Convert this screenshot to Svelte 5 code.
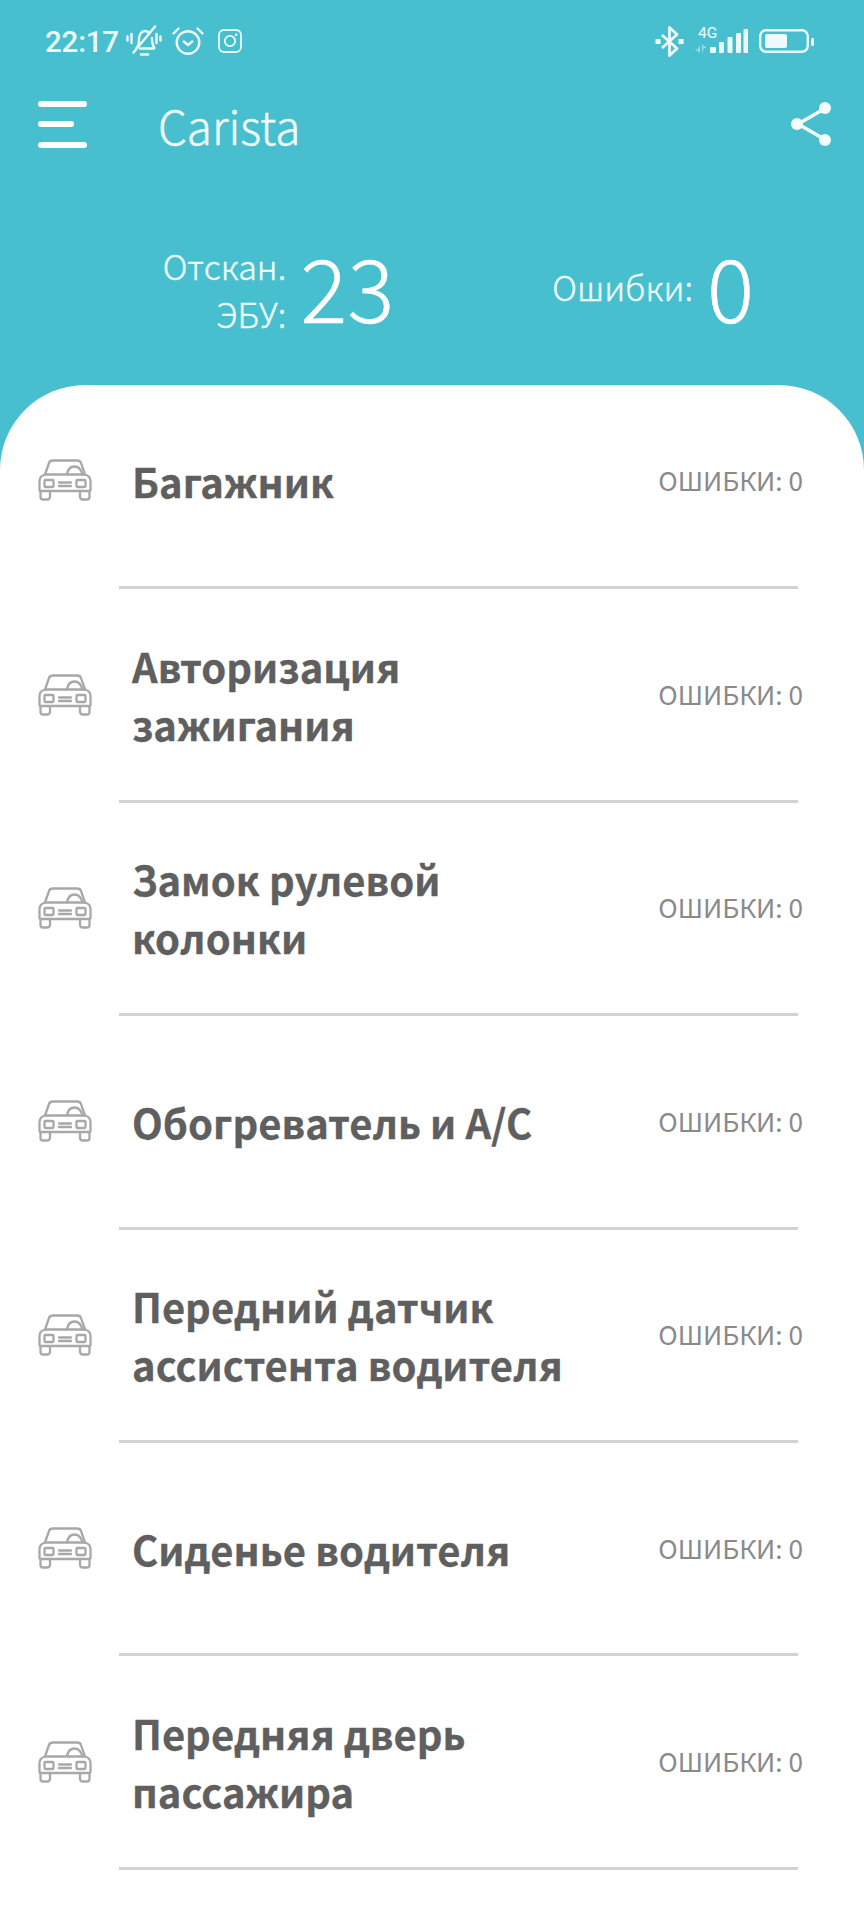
<script>
  const rows = [
    ['Багажник'],
    ['Авторизация', 'зажигания'],
    ['Замок рулевой', 'колонки'],
    ['Обогреватель и A/C'],
    ['Передний датчик', 'ассистента водителя'],
    ['Сиденье водителя'],
    ['Передняя дверь', 'пассажира']
  ];
</script>

<div class="page">
  <header class="head">
    <div class="status">
      <span class="time">22:17</span>
      <svg class="st bell" viewBox="0 0 36 32" fill="none" stroke="currentColor" stroke-width="2.4" stroke-linecap="round" stroke-linejoin="round">
        <path d="M10.500 23c2-2 2.500-4.500 2.500-9 0-4.500 2.600-8 6-8 2 0 3.600.8 4.700 2.200M26 13c0 5 .5 7.500 2.500 9.500 0 .5-.5 1-1 1H14"/>
        <path d="M7.500 27.500 29 1.500"/>
        <path d="M15 29.500h7M1.500 11.500v4M5.500 9v9M30.500 9v9M34.500 11.500v4"/>
      </svg>
      <svg class="st alarm" viewBox="0 0 32 28" fill="none" stroke="currentColor" stroke-width="2.400" stroke-linecap="round" stroke-linejoin="round">
        <circle cx="16" cy="15.500" r="11.300"/>
        <path d="M11.800 14.500l4.200 3.500 4.200-3.500M1.500 6.500l5-5M30.500 6.500l-5-5"/>
      </svg>
      <svg class="st insta" viewBox="0 0 24 24" fill="none" stroke="currentColor" stroke-width="1.800">
        <rect x="1" y="1" width="22" height="22" rx="5"/>
        <circle cx="12" cy="12" r="5.200"/>
        <circle cx="18.200" cy="5.800" r="1.300" fill="currentColor" stroke="none"/>
      </svg>
      <span class="spacer"></span>
      <svg class="st bt" viewBox="0 0 29 31" fill="none" stroke="currentColor" stroke-width="2.800" stroke-linejoin="round">
        <path d="M7 9l15 13.500-7.500 7V1.500l7.500 7L7 22"/>
        <path d="M3 15.500h.1M26 15.500h.1" stroke-width="5" stroke-linecap="square"/>
      </svg>
      <div class="net">
        <span class="g4">4G</span>
        <svg class="arrows" viewBox="0 0 12 9" fill="currentColor"><path d="M5 0v9L0 5h3zM7 9V0l5 4H9z"/></svg>
      </div>
      <svg class="st signal" viewBox="0 0 38 24" fill="currentColor">
        <rect x="0" y="18" width="6" height="6" rx="1"/>
        <rect x="9" y="13" width="5" height="11" rx="1"/>
        <rect x="17.500" y="8" width="5" height="16" rx="1"/>
        <rect x="26" y="4" width="5" height="20" rx="1"/>
        <rect x="33.500" y="0" width="4.500" height="24" rx="1"/>
      </svg>
      <svg class="st batt" viewBox="0 0 55 24" fill="none">
        <rect x="1.200" y="1.200" width="47.600" height="21.600" rx="6" stroke="currentColor" stroke-width="2.400"/>
        <rect x="6" y="5" width="22" height="14" rx="2" fill="currentColor"/>
        <rect x="52" y="9" width="3" height="8" rx="1.200" fill="currentColor"/>
      </svg>
    </div>
    <div class="bar">
      <div class="menu"><i class="long"></i><i class="short"></i><i class="long"></i></div>
      <h1>Carista</h1>
      <svg class="share" viewBox="0 0 40 44" fill="currentColor" stroke="currentColor">
        <path d="M33 7 7 22l26 15" fill="none" stroke-width="3.500"/>
        <circle cx="34" cy="6" r="6" stroke="none"/>
        <circle cx="6" cy="22" r="6" stroke="none"/>
        <circle cx="34" cy="38" r="6" stroke="none"/>
      </svg>
    </div>
    <div class="stats">
      <div class="stat">
        <span class="label two">Отскан.<br />ЭБУ:</span>
        <span class="num">23</span>
      </div>
      <div class="stat">
        <span class="label">Ошибки:</span>
        <span class="num">0</span>
      </div>
    </div>
  </header>

  <main class="card">
    {#each rows as lines}
      <div class="row">
        <svg class="car" viewBox="0 0 54 42" fill="none" stroke="currentColor" stroke-width="2.300" stroke-linecap="round" stroke-linejoin="round">
          <path d="M7 15.500 11 4C11.500 2.500 13 1.500 15 1.500h24c2 0 3.500 1 4 2.500L47 15.500"/>
          <path d="M29 15c1-5 4-7.500 7.500-7.500S43 10 44.500 15.500"/>
          <path d="M7 15.500h40c3.500 1 5.500 3.500 5.500 6.500v9c0 .5-.5 1-1 1h-49c-.5 0-1-.5-1-1v-9c0-3 2-5.500 5.500-6.500z"/>
          <rect x="6.500" y="21" width="9" height="7" rx="1"/>
          <rect x="38.500" y="21" width="9" height="7" rx="1"/>
          <path d="M21 23.500h12M21 27h12"/>
          <path d="M2.500 33v5c0 1.500 1 2.500 2.500 2.500h4c2 0 3-1 3-3V33M51.500 33v5c0 1.500-1 2.500-2.500 2.500h-4c-2 0-3-1-3-3V33"/>
        </svg>
        <div class="name">
          {#each lines as l}<div>{l}</div>{/each}
        </div>
        <div class="err">ОШИБКИ: 0</div>
        <div class="line"></div>
      </div>
    {/each}
  </main>
</div>

<style>
  :global(body) { margin: 0; background: #fff; }
  .page {
    width: 864px;
    height: 1920px;
    overflow: hidden;
    background: #47bfcf;
    font-family: "Noto Sans CJK SC", "Noto Sans", sans-serif;
    color: #fff;
  }
  .head { height: 385px; display: flex; flex-direction: column; }
  .status {
    height: 40px;
    margin-top: 21px;
    padding: 0 50px 0 45px;
    display: flex;
    align-items: center;
    color: #eefbfc;
  }
  .time { font: 500 29.500px/40px Roboto, sans-serif; letter-spacing: -0.2px; width: 72px; white-space: nowrap; margin-top: 2px; }
  .st { display: block; flex: none; }
  .bell { width: 36px; height: 32px; margin-left: 9px; }
  .alarm { width: 32px; height: 28px; margin-left: 10px; }
  .insta { width: 24px; height: 24px; margin-left: 14px; }
  .spacer { flex: 1; }
  .bt { width: 29px; height: 31px; }
  .net { width: 15px; margin-left: 11px; position: relative; height: 30px; flex: none; }
  .g4 { position: absolute; left: 3px; top: 0; font: 400 15.500px/15px Roboto, sans-serif; }
  .arrows { position: absolute; left: 0; top: 18px; width: 12px; height: 9px; opacity: .45; }
  .signal { width: 38px; height: 24px; }
  .batt { width: 55px; height: 24px; margin-left: 11px; }

  .bar {
    margin-top: 33px;
    height: 60px;
    display: flex;
    align-items: center;
    padding: 0 33px 0 38px;
  }
  .menu { width: 49px; display: flex; flex-direction: column; gap: 14.500px; }
  .menu i { display: block; height: 6px; border-radius: 3px; background: #fff; }
  .menu .long { width: 49px; }
  .menu .short { width: 36px; }
  h1 {
    margin: 2px 0 0 71px;
    flex: 1;
    font-size: 46px;
    font-weight: 300;
    line-height: 60px;
    color: #f2fcfd;
    -webkit-text-stroke: 0.4px #f2fcfd;
  }
  .share { width: 40px; height: 44px; color: #f4fbfc; }

  .stats {
    flex: 1;
    display: flex;
    justify-content: flex-end;
    align-items: flex-start;
    gap: 158px;
    padding: 86px 110px 0 0;
  }
  .stat { display: flex; align-items: center; height: 90px; }
  .label {
    font-size: 34px;
    font-weight: 300;
    line-height: 48px;
    text-align: right;
    color: #f0fbfc;
    margin-top: 3px;
    -webkit-text-stroke: 0.4px #f0fbfc;
  }
  .label.two { margin-top: 9px; }
  .num {
    font-size: 88px;
    font-weight: 300;
    line-height: 90px;
    margin-left: 14px;
    -webkit-text-stroke: 0.4px #fff;
  }

  .card {
    height: 1535px;
    background: #fff;
    border-radius: 85px 85px 0 0;
    padding-top: 1px;
    box-sizing: border-box;
  }
  .row {
    position: relative;
    height: 213.4px;
    display: flex;
    align-items: center;
    padding: 0 61px 2px 38px;
    box-sizing: border-box;
    color: #5f5f5f;
  }
  .row:first-child { margin-top: -10px; padding-bottom: 4px; }
  .car { width: 54px; height: 42px; flex: none; color: #a8a8a8; margin-bottom: 1px; }
  .name {
    margin-left: 40px;
    flex: 1;
    font-size: 40px;
    font-weight: 700;
    line-height: 58px;
    color: #5f5f5f;
    -webkit-text-stroke: 0.3px #5f5f5f;
  }
  .err { font-size: 26.200px; font-weight: 400; color: #8a8a8a; white-space: nowrap; margin-bottom: 2px; }
  .line {
    position: absolute;
    left: 119px;
    right: 66px;
    bottom: 0;
    height: 3px;
    background: #d3d3d3;
  }
</style>
